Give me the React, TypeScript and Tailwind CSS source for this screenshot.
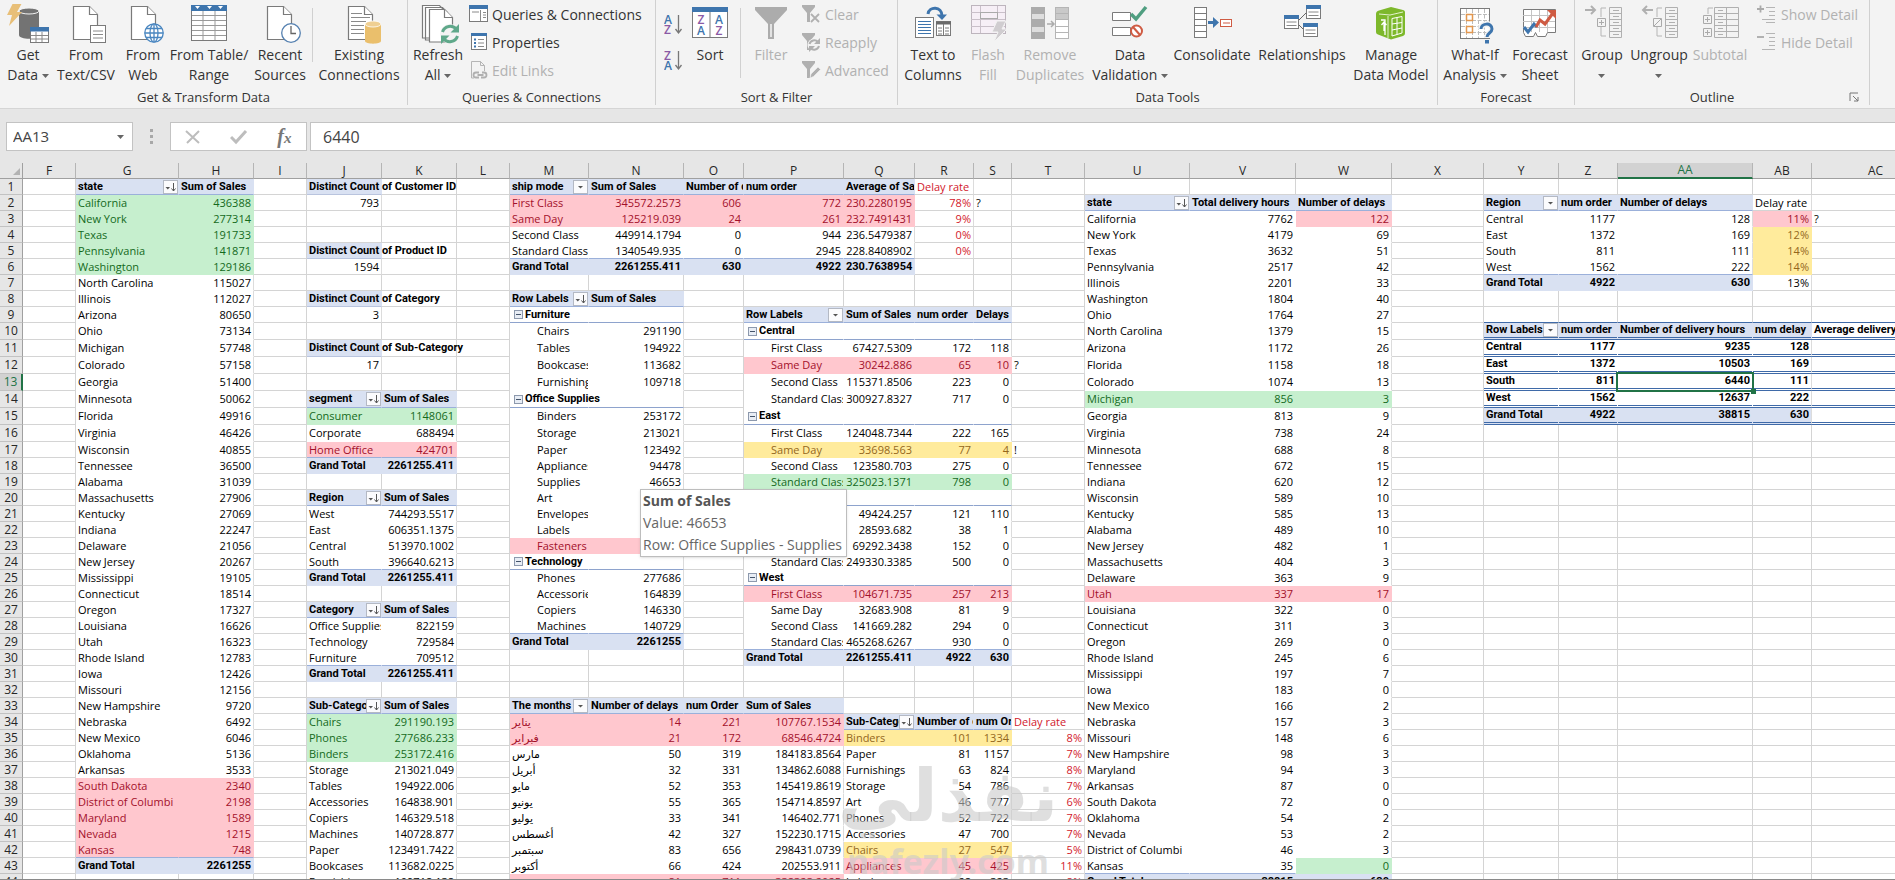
import type { ReactNode } from "react";

const COLS: [string, number][] = [
  ["F", 53], ["G", 103], ["H", 75], ["I", 53], ["J", 75], ["K", 75], ["L", 53], ["M", 79],
  ["N", 95], ["O", 60], ["P", 100], ["Q", 71], ["R", 59], ["S", 38], ["T", 73], ["U", 105],
  ["V", 106], ["W", 96], ["X", 92], ["Y", 75], ["Z", 59], ["AA", 135], ["AB", 59], ["AC", 128],
];
const TOTAL_WIDTH = 23 + COLS.reduce((sum, c) => sum + c[1], 0);
const ROW_COUNT = 44;

// Row codes: h header, t grand total, s group heading, p plain, i indented,
// g/r/y green, red and yellow fills (G/R/Y when indented), n normal cell,
// d red text, o overflowing title, H/D/T rows of the double ruled table
type Block = { col: string; row: number; btn?: "sort" | "down"; rows: string[] };

const BLOCKS: Block[] = [
  { col: "G", row: 1, btn: "sort", rows: [
    "h|state|Sum of Sales", "g|California|436388", "g|New York|277314", "g|Texas|191733",
    "g|Pennsylvania|141871", "g|Washington|129186", "p|North Carolina|115027", "p|Illinois|112027",
    "p|Arizona|80650", "p|Ohio|73134", "p|Michigan|57748", "p|Colorado|57158", "p|Georgia|51400",
    "p|Minnesota|50062", "p|Florida|49916", "p|Virginia|46426", "p|Wisconsin|40855",
    "p|Tennessee|36500", "p|Alabama|31039", "p|Massachusetts|27906", "p|Kentucky|27069",
    "p|Indiana|22247", "p|Delaware|21056", "p|New Jersey|20267", "p|Mississippi|19105",
    "p|Connecticut|18514", "p|Oregon|17327", "p|Louisiana|16626", "p|Utah|16323",
    "p|Rhode Island|12783", "p|Iowa|12426", "p|Missouri|12156", "p|New Hampshire|9720",
    "p|Nebraska|6492", "p|New Mexico|6046", "p|Oklahoma|5136", "p|Arkansas|3533",
    "r|South Dakota|2340", "r|District of Columbi|2198", "r|Maryland|1589", "r|Nevada|1215",
    "r|Kansas|748", "t|Grand Total|2261255",
  ] },
  { col: "J", row: 1, rows: ["o|Distinct Count of Customer ID", "n|793"] },
  { col: "J", row: 5, rows: ["o|Distinct Count of Product ID", "n|1594"] },
  { col: "J", row: 8, rows: ["o|Distinct Count of Category", "n|3"] },
  { col: "J", row: 11, rows: ["o|Distinct Count of Sub-Category", "n|17"] },
  { col: "J", row: 14, btn: "sort", rows: [
    "h|segment|Sum of Sales", "g|Consumer|1148061", "p|Corporate|688494", "r|Home Office|424701",
    "t|Grand Total|2261255.411",
  ] },
  { col: "J", row: 20, btn: "sort", rows: [
    "h|Region|Sum of Sales", "p|West|744293.5517", "p|East|606351.1375", "p|Central|513970.1002",
    "p|South|396640.6213", "t|Grand Total|2261255.411",
  ] },
  { col: "J", row: 27, btn: "sort", rows: [
    "h|Category|Sum of Sales", "p|Office Supplies|822159", "p|Technology|729584",
    "p|Furniture|709512", "t|Grand Total|2261255.411",
  ] },
  { col: "J", row: 33, btn: "sort", rows: [
    "h|Sub-Category|Sum of Sales", "g|Chairs|291190.193", "g|Phones|277686.233",
    "g|Binders|253172.416", "p|Storage|213021.049", "p|Tables|194922.006",
    "p|Accessories|164838.901", "p|Copiers|146329.518", "p|Machines|140728.877",
    "p|Paper|123491.7422", "p|Bookcases|113682.0225", "p|Furnishings|109718.138",
  ] },
  { col: "M", row: 1, btn: "down", rows: [
    "h|ship mode|Sum of Sales|Number of delays|num order|Average of Sales",
    "r|First Class|345572.2573|606|772|230.2280195", "r|Same Day|125219.039|24|261|232.7491431",
    "p|Second Class|449914.1794|0|944|236.5479387", "p|Standard Class|1340549.935|0|2945|228.8408902",
    "t|Grand Total|2261255.411|630|4922|230.7638954",
  ] },
  { col: "R", row: 1, rows: ["d|Delay rate", "d|78%", "d|9%", "d|0%", "d|0%"] },
  { col: "S", row: 2, rows: ["n|?"] },
  { col: "M", row: 8, btn: "sort", rows: [
    "h|Row Labels|Sum of Sales", "s|Furniture|", "i|Chairs|291190", "i|Tables|194922",
    "i|Bookcases|113682", "i|Furnishings|109718", "s|Office Supplies|", "i|Binders|253172",
    "i|Storage|213021", "i|Paper|123492", "i|Appliances|94478", "i|Supplies|46653",
    "i|Art|27119", "i|Envelopes|16476", "i|Labels|12486", "R|Fasteners|3024", "s|Technology|",
    "i|Phones|277686", "i|Accessories|164839", "i|Copiers|146330", "i|Machines|140729",
    "t|Grand Total|2261255",
  ] },
  { col: "P", row: 9, btn: "down", rows: [
    "h|Row Labels|Sum of Sales|num order|Delays", "s|Central|||",
    "i|First Class|67427.5309|172|118", "R|Same Day|30242.886|65|10",
    "i|Second Class|115371.8506|223|0", "i|Standard Class|300927.8327|717|0", "s|East|||",
    "i|First Class|124048.7344|222|165", "Y|Same Day|33698.563|77|4",
    "i|Second Class|123580.703|275|0", "G|Standard Class|325023.1371|798|0", "s|South|||",
    "i|First Class|49424.257|121|110", "i|Same Day|28593.682|38|1",
    "i|Second Class|69292.3438|152|0", "i|Standard Class|249330.3385|500|0", "s|West|||",
    "R|First Class|104671.735|257|213", "i|Same Day|32683.908|81|9",
    "i|Second Class|141669.282|294|0", "i|Standard Class|465268.6267|930|0",
    "t|Grand Total|2261255.411|4922|630",
  ] },
  { col: "T", row: 12, rows: ["n|?"] },
  { col: "T", row: 17, rows: ["n|!"] },
  { col: "M", row: 33, btn: "down", rows: [
    "h|The months|Number of delays|num Order|Sum of Sales", "r|يناير|14|221|107767.1534",
    "r|فبراير|21|172|68546.4724", "p|مارس|50|319|184183.8564", "p|أبريل|32|331|134862.6088",
    "p|مايو|52|353|145419.8619", "p|يونيو|55|365|154714.8597", "p|يوليو|33|341|146402.771",
    "p|أغسطس|42|327|152230.1715", "p|سبتمبر|83|656|298431.0739", "p|أكتوبر|66|424|202553.911",
    "r|نوفمبر|81|711|338323.2025",
  ] },
  { col: "Q", row: 34, btn: "sort", rows: [
    "h|Sub-Category|Number of delays|num Order", "y|Binders|101|1334", "p|Paper|81|1157",
    "p|Furnishings|63|824", "p|Storage|54|786", "p|Art|46|777", "p|Phones|52|722",
    "p|Accessories|47|700", "y|Chairs|27|547", "r|Appliances|45|425", "p|Labels|28|323",
  ] },
  { col: "T", row: 34, rows: [
    "d|Delay rate", "d|8%", "d|7%", "d|8%", "d|7%", "d|6%", "d|7%", "d|7%", "d|5%", "d|11%", "d|8%",
  ] },
  { col: "U", row: 2, btn: "sort", rows: [
    "h|state|Total delivery hours|Number of delays", "p|California|7762|122", "p|New York|4179|69",
    "p|Texas|3632|51", "p|Pennsylvania|2517|42", "p|Illinois|2201|33", "p|Washington|1804|40",
    "p|Ohio|1764|27", "p|North Carolina|1379|15", "p|Arizona|1172|26", "p|Florida|1158|18",
    "p|Colorado|1074|13", "g|Michigan|856|3", "p|Georgia|813|9", "p|Virginia|738|24",
    "p|Minnesota|688|8", "p|Tennessee|672|15", "p|Indiana|620|12", "p|Wisconsin|589|10",
    "p|Kentucky|585|13", "p|Alabama|489|10", "p|New Jersey|482|1", "p|Massachusetts|404|3",
    "p|Delaware|363|9", "r|Utah|337|17", "p|Louisiana|322|0", "p|Connecticut|311|3",
    "p|Oregon|269|0", "p|Rhode Island|245|6", "p|Mississippi|197|7", "p|Iowa|183|0",
    "p|New Mexico|166|2", "p|Nebraska|157|3", "p|Missouri|148|6", "p|New Hampshire|98|3",
    "p|Maryland|94|3", "p|Arkansas|87|0", "p|South Dakota|72|0", "p|Oklahoma|54|2",
    "p|Nevada|53|2", "p|District of Columbi|46|3", "p|Kansas|35|0", "t|Grand Total|38815|630",
  ] },
  { col: "W", row: 3, rows: ["r|122"] },
  { col: "W", row: 43, rows: ["g|0"] },
  { col: "Y", row: 2, btn: "down", rows: [
    "h|Region|num order|Number of delays", "p|Central|1177|128", "p|East|1372|169",
    "p|South|811|111", "p|West|1562|222", "t|Grand Total|4922|630",
  ] },
  { col: "AB", row: 2, rows: ["n|Delay rate", "r|11%", "y|12%", "y|14%", "y|14%", "n|13%"] },
  { col: "AC", row: 3, rows: ["n|?"] },
  { col: "Y", row: 10, btn: "down", rows: [
    "H|Row Labels|num order|Number of delivery hours|num delay", "D|Central|1177|9235|128",
    "D|East|1372|10503|169", "D|South|811|6440|111", "D|West|1562|12637|222",
    "T|Grand Total|4922|38815|630",
  ] },
  { col: "AC", row: 10, rows: ["D|Average delivery hours", "D|", "D|", "D|", "D|", "D|"] },
];

type Cell = { kind: string; text: string; first: boolean; last: boolean; btn?: "sort" | "down"; ruled?: boolean };

const colIndex = (name: string) => COLS.findIndex((c) => c[0] === name);

function buildCells() {
  const cells: Record<string, Cell> = {};
  for (const b of BLOCKS) {
    const start = colIndex(b.col);
    b.rows.forEach((line, r) => {
      const [kind, ...texts] = line.split("|");
      texts.forEach((text, c) => {
        cells[`${start + c}-${b.row + r}`] = {
          kind, text, first: c === 0, last: c === texts.length - 1,
          btn: r === 0 && c === 0 ? b.btn : undefined,
        };
        const above = cells[`${start + c}-${b.row + r - 1}`];
        if (kind === "t" && above) above.ruled = true;
      });
    });
  }
  return cells;
}

const CELLS = buildCells();

const KIND: Record<string, string> = {
  h: "bg-[#d9e1f2] font-['Roboto',sans-serif] font-bold border-b-[#9bb0da]",
  t: "bg-[#d9e1f2] font-['Roboto',sans-serif] font-bold border-b-transparent",
  s: "font-['Roboto',sans-serif] font-bold border-b-[#8ea3cd]",
  p: "border-b-transparent",
  i: "border-b-transparent",
  g: "bg-[#c6efce] text-[#146a1c] border-b-transparent",
  G: "bg-[#c6efce] text-[#146a1c] border-b-transparent",
  r: "bg-[#ffc7ce] text-[#a3102a] border-b-transparent",
  R: "bg-[#ffc7ce] text-[#a3102a] border-b-transparent",
  y: "bg-[#ffeb9c] text-[#94671c] border-b-transparent",
  Y: "bg-[#ffeb9c] text-[#94671c] border-b-transparent",
  n: "border-b-[#d4d4d4]",
  d: "text-[#d2202c] border-b-[#d4d4d4]",
  o: "bg-[#d9e1f2] font-['Roboto',sans-serif] font-bold border-b-[#b9c4de]",
  H: "bg-[#d9e1f2] font-['Roboto',sans-serif] font-bold border-b-3 [border-bottom-style:double] border-b-[#3f6aa8]",
  D: "font-['Roboto',sans-serif] font-bold border-b-3 [border-bottom-style:double] border-b-[#3f6aa8]",
  T: "bg-[#d9e1f2] font-['Roboto',sans-serif] font-bold border-b-3 [border-bottom-style:double] border-b-[#3f6aa8]",
};

function FilterButton({ type, label }: { type: "sort" | "down"; label: string }) {
  return (
    <button aria-label={`Filter ${label}`} className="h-[14px] w-[15px] shrink-0 border border-[#b4b9c4] bg-[#fbfbfd]">
      <svg width="13" height="12" viewBox="0 0 13 12" fill="#555" stroke="#555">
        {type === "sort" ? (
          <>
            <path d="M1.500 6h4.500L3.800 8.500z" stroke="none" />
            <path d="M9.500 2v8M7.500 7.500l2 2.500 2-2.500" fill="none" />
          </>
        ) : (
          <path d="M4 5h5L6.500 7.500z" stroke="none" />
        )}
      </svg>
    </button>
  );
}

function SheetCell({ cell, selected, topRule }: { cell?: Cell; selected: boolean; topRule: boolean }) {
  if (!cell) {
    return <td className={`border-r border-b border-r-[#d4d4d4] p-0 ${topRule ? "border-b-[#3f6aa8]" : "border-b-[#d4d4d4]"}`} />;
  }
  const { kind, text } = cell;
  const gridRight = "ndDHT".includes(kind) ? cell.last && kind !== "H" : cell.last && "psi".includes(kind);
  const numeric = /^[\d.]+%?$/.test(text);
  const indented = "iGRY".includes(kind) && cell.first;
  const spill = "so".includes(kind);
  const base = cell.ruled ? KIND[kind].replace("border-b-transparent", "border-b-[#9bb0da]") : KIND[kind];
  return (
    <td className={`border-r border-b p-0 ${gridRight ? "border-r-[#dcdcdc]" : "border-r-transparent"} ${base} ${selected ? "relative" : ""}`}>
      <div className={`flex items-center ${spill ? "" : "overflow-hidden"}`}>
        {kind === "s" && cell.first && (
          <button aria-label={`Collapse ${text}`} className="ml-1 flex h-[9px] w-[9px] shrink-0 items-center justify-center border border-[#8d99ad] bg-[#e8edf5]">
            <span className="h-px w-[5px] bg-[#44546a]" />
          </button>
        )}
        <div
          className={`min-w-0 flex-1 leading-[14px] whitespace-nowrap ${numeric ? "text-right" : "text-left"} ${
            indented ? "pl-[27px]" : "pl-[2px]"
          } ${numeric ? "pr-[2px]" : ""} ${spill ? "" : "overflow-hidden"}`}
        >
          {text}
        </div>
        {cell.btn && <FilterButton type={cell.btn} label={text} />}
      </div>
      {selected && (
        <div className="pointer-events-none absolute -inset-x-0.5 -top-0.5 -bottom-1 border-2 border-[#217346]">
          <span className="absolute -right-1 -bottom-1 h-[5px] w-[5px] bg-[#217346]" />
        </div>
      )}
    </td>
  );
}

function Sheet() {
  return (
    <div className="relative min-h-0 flex-1 overflow-hidden bg-white">
      <table
        className="table-fixed border-separate border-spacing-0 bg-white font-['Open_Sans','DejaVu_Sans',sans-serif] text-[11px] text-black"
        style={{ width: TOTAL_WIDTH }}
      >
        <colgroup>
          <col style={{ width: 23 }} />
          {COLS.map(([name, w]) => <col key={name} style={{ width: w }} />)}
        </colgroup>
        <thead>
          <tr className="h-4 bg-[#e6e6e6] text-[12px] leading-[14px] text-[#262626]">
            <th aria-label="Select all" className="border-r border-b border-[#a0a0a0] p-0">
              <svg className="ml-auto" width="12" height="12" viewBox="0 0 12 12"><path d="M10 3v7H3z" fill="#b3b3b3" /></svg>
            </th>
            {COLS.map(([name]) => (
              <th
                key={name}
                className={`border-r border-r-[#b5b5b5] p-0 font-normal ${
                  name === "AA" ? "border-b-2 border-b-[#217346] bg-[#d2d2d2] text-[#217346]" : "border-b border-b-[#a0a0a0]"
                }`}
              >
                {name}
              </th>
            ))}
          </tr>
        </thead>
        <tbody>
          {Array.from({ length: ROW_COUNT }, (_, i) => i + 1).map((row) => (
            <tr key={row} className={row >= 10 && row <= 16 ? "h-[17px]" : "h-4"}>
              <th
                className={`border-b border-b-[#c2c2c2] p-0 text-[12px] leading-[14px] font-normal ${
                  row === 13 ? "border-r-2 border-r-[#217346] bg-[#d2d2d2] text-[#217346]" : "border-r border-r-[#a0a0a0] bg-[#e6e6e6] text-[#262626]"
                }`}
              >
                {row}
              </th>
              {COLS.map(([name], c) => (
                <SheetCell
                  key={name}
                  cell={CELLS[`${c}-${row}`]}
                  selected={name === "AA" && row === 13}
                  topRule={row === 9 && c >= colIndex("Y")}
                />
              ))}
            </tr>
          ))}
        </tbody>
      </table>

      <div
        role="tooltip"
        className="absolute top-[326px] left-[640px] border border-[#bdbdbd] bg-white pr-1 pl-0.5 font-['Open_Sans',sans-serif] text-[14px] leading-[22px] whitespace-nowrap text-[#666] shadow-sm"
      >
        <p className="font-bold text-[#555]">Sum of Sales</p>
        <p>Value: 46653</p>
        <p>Row: Office Supplies - Supplies</p>
      </div>

      <div className="pointer-events-none absolute top-[588px] left-[843px] flex w-[210px] flex-col items-center text-[#cacaca]/60">
        <span className="font-['DejaVu_Sans',sans-serif] text-[72px] leading-[90px] font-bold">نفذلي</span>
        <span className="font-['Noto_Sans',sans-serif] text-[34px] leading-[40px] font-bold">nafezly.com</span>
      </div>
    </div>
  );
}

/* ---------- ribbon icons ---------- */

function Big({ children }: { children: ReactNode }) {
  return <svg width="44" height="40" viewBox="0 0 44 40" fill="none">{children}</svg>;
}

function Doc({ x = 9, stroke = "#7a7a7a" }) {
  return (
    <g transform={`translate(${x} 2)`} fill="#fff" stroke={stroke} strokeWidth="1.200">
      <path d="M.5.5h16l8 8v25h-24z" />
      <path d="M16.500.5v8h8" />
    </g>
  );
}

function MiniTable({ x, y, w = 18, h = 15 }: { x: number; y: number; w?: number; h?: number }) {
  return (
    <g transform={`translate(${x} ${y})`}>
      <rect x=".5" y=".5" width={w} height={h} fill="#fff" stroke="#7a7a7a" />
      <rect width={w + 1} height="4.500" fill="#3e75ad" />
      <path d={`M1 8.500h${w - 1}M1 12h${w - 1}M${w / 3} 5v${h - 5}M${(w / 3) * 2} 5v${h - 5}`} stroke="#8a8a8a" />
    </g>
  );
}

const icons = {
  getData: (
    <Big>
      <path d="M13 7v24c0 5 20 5 20 0V7z" fill="#737373" />
      <ellipse cx="23" cy="7" rx="10" ry="3" fill="#737373" stroke="#f3f3f3" />
      <path d="M7-1h9l-5 9h5L3 22l3-11H1z" fill="#e8bf78" />
      <MiniTable x={24} y={23} />
    </Big>
  ),
  csv: (
    <Big>
      <Doc />
      <rect x="26.500" y="21.500" width="15" height="17" fill="#fff" stroke="#7a7a7a" />
      <path d="M29 27h10M29 30.500h10M29 34h10" stroke="#8a8a8a" />
    </Big>
  ),
  web: (
    <Big>
      <Doc x={10} />
      <g stroke="#4a86c0" strokeWidth="1.300" fill="#fff">
        <circle cx="33" cy="29" r="9.200" />
        <ellipse cx="33" cy="29" rx="4" ry="9.200" />
        <path d="M23.800 29h18.400M33 20v18M25 24.500h16M25 33.500h16" fill="none" />
      </g>
    </Big>
  ),
  table: (
    <Big>
      <rect x="4.500" y="1.500" width="35" height="35" fill="#fff" stroke="#7a7a7a" />
      <rect x="4" y="1" width="36" height="6" fill="#3e75ad" />
      <path d="M8 2h5l-2.500 3zM20 2h5l-2.500 3zM31 2h5l-2.500 3z" fill="#fff" />
      <path d="M5 11.500h34M5 16.500h34M5 21.500h34M5 26.500h34M5 31.500h34M16 7v29M28 7v29" stroke="#999" />
    </Big>
  ),
  recent: (
    <Big>
      <Doc />
      <circle cx="33" cy="29" r="9.300" fill="#fff" stroke="#5580b0" strokeWidth="1.300" />
      <path d="M33 22v7.500h5" stroke="#666" strokeWidth="1.300" />
    </Big>
  ),
  existing: (
    <Big>
      <Doc x={11} />
      <path d="M14 9.500h11M14 13.500h19M14 17.500h15M14 21.500h13M14 25.500h13M14 29.500h13" stroke="#8a8a8a" />
      <path d="M28 20v17c0 3.500 16 3.500 16 0V20z" fill="#eabf6c" />
      <ellipse cx="36" cy="20" rx="8" ry="3" fill="#efcf92" stroke="#fff" strokeWidth=".8" />
    </Big>
  ),
  refresh: (
    <Big>
      <g fill="#fff" stroke="#7a7a7a" strokeWidth="1.200">
        <path d="M6.500 34V1.500h17l5 5V34zM9.500 36V3.500h17l5 5V36z" />
        <path d="M13.500 38V5.500h15l8 8V38z" />
        <path d="M28.500 5.500v8h8" />
      </g>
      <circle cx="34" cy="30" r="10" fill="#f3f3f3" />
      <g stroke="#5fa88a" strokeWidth="3">
        <path d="M26.500 28a8 8 0 0 1 14-2.500M41.500 32a8 8 0 0 1-14 2.500" />
      </g>
      <path d="M43 20v8.500h-8.500zM25 40v-8.500h8.500z" fill="#5fa88a" />
    </Big>
  ),
  sort: (
    <Big>
      <rect x="4.500" y="3.500" width="35" height="30" fill="#fff" stroke="#7a7a7a" />
      <rect x="4" y="3" width="36" height="5" fill="#3e75ad" />
      <path d="M22 8v25" stroke="#7a7a7a" />
      <g fontFamily="Open Sans" fontSize="12" fontWeight="600" textAnchor="middle">
        <text x="13" y="20" fill="#8a5aa5">Z</text><text x="13" y="31" fill="#3e75ad">A</text>
        <text x="31" y="20" fill="#3e75ad">A</text><text x="31" y="31" fill="#8a5aa5">Z</text>
      </g>
    </Big>
  ),
  filter: (
    <Big>
      <path d="M6 3h32v3L25 20v15h-6V20L6 6z" fill="#acacac" />
      <path d="M22 20v13" stroke="#e3e3e3" strokeWidth="2" />
    </Big>
  ),
  textColumns: (
    <Big>
      <rect x="4.500" y="13.500" width="18" height="20" fill="#fff" stroke="#7a7a7a" />
      <path d="M7 17.500h13M7 20.500h13M7 23.500h13M7 26.500h13M7 29.500h13" stroke="#3e75ad" />
      <rect x="25.500" y="17.500" width="14" height="14" fill="#fff" stroke="#7a7a7a" />
      <path d="M25 19h15" stroke="#6b6b6b" strokeWidth="3" />
      <path d="M27 24h4M27 27h4M27 30h4M34 24h4M34 27h4M34 30h4M32.500 20v11" stroke="#7a7a7a" />
      <path d="M17 10c1-8 14-8 14 2" stroke="#3e75ad" strokeWidth="3" />
      <path d="M25.500 10.500h10.500L31 16z" fill="#3e75ad" />
    </Big>
  ),
  flash: (
    <Big>
      <rect x="5.500" y="1.500" width="34" height="28" fill="#f6eff6" stroke="#bdb5bd" />
      <path d="M5 8.500h34M5 15.500h34M5 22.500h34M14.500 2v27M31.500 2v14" stroke="#c9c0c9" />
      <rect x="14.500" y="8.500" width="17" height="6" stroke="#aaa" />
      <path d="M31 17h9l-4 8h5L28 38l4-10h-6z" fill="#d0cdd0" stroke="#f3f3f3" />
    </Big>
  ),
  duplicates: (
    <Big>
      <rect x="3" y="3" width="14" height="32" fill="#acacac" />
      <path d="M4 10h12v5H4zM4 23h12v5H4z" fill="#dedede" />
      <path d="M19 20h6M23 17l3 3-3 3" stroke="#acacac" strokeWidth="1.500" />
      <rect x="27.500" y="3.500" width="13" height="31" fill="#fff" stroke="#b5b5b5" />
      <path d="M28 4h12v5H28zM28 9h12v6H28z" fill="#c9c9c9" />
      <path d="M28 9.500h12M28 15.500h12M28 22.500h12M28 28.500h12" stroke="#b5b5b5" />
    </Big>
  ),
  validation: (
    <Big>
      <path d="M4.500 8.500h18v8h-18zM4.500 23.500h18v8h-18z" fill="#fff" stroke="#7a7a7a" />
      <path d="M23 10l5 5L38 3" stroke="#4f9e80" strokeWidth="3.500" />
      <circle cx="28.500" cy="27" r="5.500" fill="#fff" stroke="#cf5b43" strokeWidth="2" />
      <path d="M25 23l7 8" stroke="#cf5b43" strokeWidth="2" />
    </Big>
  ),
  consolidate: (
    <Big>
      <rect x="4.500" y="3.500" width="12" height="30" fill="#fff" stroke="#7a7a7a" />
      <path d="M5 9.500h12M5 15.500h12M5 21.500h12M5 27.500h12" stroke="#7a7a7a" />
      <path d="M18 17h5v-4l6 5.500-6 5.500v-4h-5z" fill="#3e75ad" />
      <rect x="30.500" y="15.500" width="11" height="7" fill="#fff" stroke="#cf5b43" />
      <path d="M33 19h7" stroke="#cf5b43" />
    </Big>
  ),
  relationships: (
    <Big>
      <path d="M18 17l8-8M18 20l6 6" stroke="#666" />
      {[[4, 11], [26, 1], [23, 19]].map(([x, y]) => (
        <g key={x} transform={`translate(${x} ${y})`}>
          <rect x=".5" y=".5" width="14" height="13" fill="#fff" stroke="#7a7a7a" />
          <rect width="15" height="4" fill="#3e75ad" />
          <path d="M2.500 7h10M2.500 10.500h10" stroke="#8a8a8a" />
        </g>
      ))}
    </Big>
  ),
  model: (
    <Big>
      <path d="M7 10c0-2 1-3 3-3.500L22 3l12 3c2 .5 2 1.500 2 3v20c0 2-1 2.500-2 3l-12 3.500-13-5c-1.500-.5-2-1.500-2-3z" fill="#7db82b" />
      <path d="M10 10l11 1 13-3M19 12v22" stroke="#e4f2cd" />
      <path d="M23 14.500l10-2v16.500l-10 3zM23 20l10-1.500M23 26l10-2M28 13.500v17" stroke="#fff" />
      <path d="M16 31V16h-4M15 18v9M12.500 21l2.500-3 2.500 3" stroke="#fff" strokeWidth="1.300" />
    </Big>
  ),
  whatIf: (
    <Big>
      <rect x="7.500" y="4.500" width="29" height="30" fill="#fff" stroke="#7a7a7a" />
      <path d="M8 10.500h28M8 16.500h28M8 22.500h28M8 28.500h28M13.500 5v29M19.500 5v29M25.500 5v29M31.500 5v29" stroke="#bbb" strokeDasharray="4 1.500" />
      <path d="M13.500 10.500h6v6h-6zM13.500 22.500h6v6h-6z" stroke="#e3974e" strokeWidth="1.500" />
      <path d="M28 25c0-6 11-7 11 0 0 4-5 4-5 9" stroke="#f3f3f3" strokeWidth="6" />
      <path d="M28 25c0-6 11-7 11 0 0 4-5 4-5 8" stroke="#3e75ad" strokeWidth="3" />
      <rect x="32" y="36" width="4" height="3.500" fill="#3e75ad" />
    </Big>
  ),
  forecast: (
    <Big>
      <path d="M5.500 5.500h32v23h-8l-2 4h-8l-2-4-2 4h-8l-2-4z" fill="#fff" stroke="#7a7a7a" />
      <path d="M5 11.500h32M5 17.500h32M5 23.500h32M13.500 6v22M21.500 6v22M29.500 6v22" stroke="#c4c4c4" />
      <path d="M6 23l4 5 6-8 3 3" stroke="#3e75ad" strokeWidth="3" />
      <path d="M18 23l4-7 5 4 8-11" stroke="#cf5b43" strokeWidth="3" />
      <path d="M29 6h9v9z" fill="#cf5b43" />
    </Big>
  ),
  group: (
    <Big>
      <path d="M5 6h10M11 2l4 4-4 4" stroke="#b0b0b0" strokeWidth="2" />
      <path d="M26 4h-5v9M21 23v9h5" stroke="#b5b5b5" />
      <path d="M17.500 14.500h8v8h-8zM19 18.500h5M21.500 16v5" stroke="#aaa" />
      <path d="M29.500 3.500h12v30h-12zM30 9.500h11M30 15.500h11M30 21.500h11M30 27.500h11M33 6.500h6M33 12.500h6M33 18.500h6M33 24.500h6M33 30.500h6" stroke="#b0b0b0" />
    </Big>
  ),
  ungroup: (
    <Big>
      <path d="M16 6H6M10 2L6 6l4 4" stroke="#b0b0b0" strokeWidth="2" />
      <path d="M25 4h-5v9M20 23v9h5" stroke="#b5b5b5" />
      <path d="M16.500 14.500h8v8h-8zM17 22l7-7" stroke="#aaa" />
      <path d="M28.500 3.500h12v30h-12zM29 9.500h11M29 15.500h11M29 21.500h11M29 27.500h11M32 6.500h6M32 12.500h6M32 18.500h6M32 24.500h6M32 30.500h6" stroke="#b0b0b0" />
    </Big>
  ),
  subtotal: (
    <Big>
      <path d="M15 4h-5v6" stroke="#b5b5b5" />
      <path d="M5.500 11.500h8v8h-8zM7 15.500h5M9.500 13v5M5.500 24.500h8v8h-8zM7 28.500h5M9.500 26v5" stroke="#aaa" />
      <path d="M16.500 3.500h24v30h-24zM17 9.500h23M17 15.500h23M17 21.500h23M17 27.500h23M28.500 4v29M20 6.500h5M20 12.500h5M20 18.500h5M20 24.500h5M20 30.500h5" stroke="#b0b0b0" />
    </Big>
  ),
};

function Small({ children }: { children: ReactNode }) {
  return <svg width="20" height="20" viewBox="0 0 20 20" fill="none" className="shrink-0">{children}</svg>;
}

const funnel = <path d="M1 1h13v2L9 9v9H6V9L1 3z" fill="#b0b0b0" />;

const smallIcons = {
  queries: (
    <Small>
      <rect x="1.500" y="1.500" width="18" height="16" fill="#fff" stroke="#7a7a7a" />
      <rect x="1" y="1" width="19" height="4" fill="#3e75ad" />
      <path d="M4 8h7M12.500 6v11M15 8.500h3M15 11h3M15 13.500h3" stroke="#8a8a8a" />
    </Small>
  ),
  properties: (
    <Small>
      <rect x="3.500" y="1.500" width="15" height="16" fill="#fff" stroke="#7a7a7a" />
      <rect x="3" y="1" width="16" height="3" fill="#3e75ad" />
      <path d="M10 7.500h6M10 11h6M10 14.500h6" stroke="#8a8a8a" />
      <path d="M6 6.500h2v2H6zM6 10h2v2H6zM6 13.500h2v2H6z" fill="#3e75ad" />
    </Small>
  ),
  links: (
    <Small>
      <path d="M6 18H3.500V1.500h9l4 4V11M12.500 1.500v4h4" stroke="#b5b5b5" />
      <path d="M11 12.500H8a2.500 2.500 0 0 0 0 5h3M14 12.500h2a2.500 2.500 0 0 1 0 5h-3M9.500 15h6" stroke="#b0b0b0" strokeWidth="1.800" />
    </Small>
  ),
  clear: <Small>{funnel}<path d="M10 10l8 8M18 10l-8 8" stroke="#b0b0b0" strokeWidth="1.800" /></Small>,
  reapply: (
    <Small>
      {funnel}
      <circle cx="13" cy="13" r="6.500" fill="#f3f3f3" />
      <path d="M8.500 12a5 5 0 0 1 8.500-2M18 14a5 5 0 0 1-8.500 2" stroke="#b0b0b0" strokeWidth="2" />
      <path d="M19 6v6h-6zM8 20v-6h6z" fill="#b0b0b0" />
    </Small>
  ),
  advanced: <Small>{funnel}<path d="M9 18l1-4 7-7 2.500 2.500-7 7z" fill="#b0b0b0" stroke="#f3f3f3" strokeWidth=".6" /></Small>,
  show: <Small><path d="M0 5h7M3.500 1.500v7" stroke="#aaa" strokeWidth="1.800" /><path d="M9 3.500h9M12 7.500h6M12 11.500h6M5 15.500h13M9 18.500h9" stroke="#b5b5b5" /></Small>,
  hide: <Small><path d="M0 5h7" stroke="#aaa" strokeWidth="1.800" /><path d="M9 1.500h9M12 5.500h6M12 9.500h6M12 13.500h6M5 17.500h13" stroke="#b5b5b5" /></Small>,
};

function Caret() {
  return <svg width="7" height="4" viewBox="0 0 7 4" className="inline-block align-middle"><path d="M0 0h7L3.500 4z" fill="#666" /></svg>;
}

function BigButton({ icon, lines, width, caret, disabled }: {
  icon: ReactNode; lines: string[]; width: string; caret?: boolean; disabled?: boolean;
}) {
  return (
    <button disabled={disabled} className={`flex shrink-0 flex-col items-center pt-1 ${width} ${disabled ? "text-[#b1b1b1]" : "text-[#333]"}`}>
      {icon}
      <span className="mt-px block text-center leading-5 whitespace-nowrap">
        {lines[0]}
        <br />
        {lines[1]}{caret && <> <Caret /></>}
      </span>
    </button>
  );
}

function SmallButton({ icon, label, disabled }: { icon: ReactNode; label: string; disabled?: boolean }) {
  return (
    <button disabled={disabled} className={`flex h-7 items-center gap-1 whitespace-nowrap ${disabled ? "text-[#b1b1b1]" : "text-[#333]"}`}>
      {icon}{label}
    </button>
  );
}

function Group({ label, width, launcher, children }: { label: string; width: string; launcher?: boolean; children: ReactNode }) {
  return (
    <section aria-label={label} className={`flex h-[105px] shrink-0 flex-col border-r border-[#d0d0d0] ${width}`}>
      <div className="flex h-[88px] shrink-0 items-start">{children}</div>
      <div className="flex h-[18px] shrink-0 items-center text-[13px] leading-[18px] text-[#333]">
        <span className="flex-1 text-center">{label}</span>
        {launcher && (
          <button aria-label="Outline settings" className="mr-1 w-4">
            <svg width="10" height="10" viewBox="0 0 10 10" fill="none" stroke="#777"><path d="M1 9V1h8M4 4l5 5M9 5v4H5" /></svg>
          </button>
        )}
      </div>
    </section>
  );
}

function SortArrow({ top, bottom, label }: { top: "A" | "Z"; bottom: "A" | "Z"; label: string }) {
  const tint = (l: string) => (l === "A" ? "#3e75ad" : "#8a5aa5");
  return (
    <button aria-label={label} className="h-6 w-5">
      <svg width="20" height="24" viewBox="0 0 20 24">
        <g fontFamily="Open Sans" fontSize="12" fontWeight="600">
          <text x="0" y="12" fill={tint(top)}>{top}</text>
          <text x="0" y="22" fill={tint(bottom)}>{bottom}</text>
        </g>
        <path d="M14.500 3v18M11.500 17l3 4 3-4" fill="none" stroke="#777" strokeWidth="1.300" />
      </svg>
    </button>
  );
}

function Ribbon() {
  return (
    <div className="flex h-[109px] shrink-0 overflow-hidden border-b border-[#d5d5d5] bg-[#f3f3f3]">
      <Group label="Get & Transform Data" width="w-[408px]">
        <BigButton icon={icons.getData} lines={["Get", "Data"]} width="w-[56px]" caret />
        <BigButton icon={icons.csv} lines={["From", "Text/CSV"]} width="w-[60px]" />
        <BigButton icon={icons.web} lines={["From", "Web"]} width="w-[54px]" />
        <BigButton icon={icons.table} lines={["From Table/", "Range"]} width="w-[78px]" />
        <BigButton icon={icons.recent} lines={["Recent", "Sources"]} width="w-[64px]" />
        <div className="mt-2 h-[54px] w-px bg-[#d0d0d0]" />
        <BigButton icon={icons.existing} lines={["Existing", "Connections"]} width="w-[92px]" />
      </Group>
      <Group label="Queries & Connections" width="w-[248px]">
        <BigButton icon={icons.refresh} lines={["Refresh", "All"]} width="w-[60px]" caret />
        <div className="flex flex-col">
          <SmallButton icon={smallIcons.queries} label="Queries & Connections" />
          <SmallButton icon={smallIcons.properties} label="Properties" />
          <SmallButton icon={smallIcons.links} label="Edit Links" disabled />
        </div>
      </Group>
      <Group label="Sort & Filter" width="w-[242px]">
        <div className="flex w-8 flex-col gap-3 pt-3 pl-2">
          <SortArrow top="A" bottom="Z" label="Sort A to Z" />
          <SortArrow top="Z" bottom="A" label="Sort Z to A" />
        </div>
        <BigButton icon={icons.sort} lines={["Sort", ""]} width="w-[44px]" />
        <div className="mt-2 mr-1 ml-2 h-[70px] w-px bg-[#d0d0d0]" />
        <BigButton icon={icons.filter} lines={["Filter", ""]} width="w-[52px]" disabled />
        <div className="ml-1 flex flex-col">
          <SmallButton icon={smallIcons.clear} label="Clear" disabled />
          <SmallButton icon={smallIcons.reapply} label="Reapply" disabled />
          <SmallButton icon={smallIcons.advanced} label="Advanced" disabled />
        </div>
      </Group>
      <Group label="Data Tools" width="w-[540px]">
        <BigButton icon={icons.textColumns} lines={["Text to", "Columns"]} width="w-[70px]" />
        <BigButton icon={icons.flash} lines={["Flash", "Fill"]} width="w-[40px]" disabled />
        <BigButton icon={icons.duplicates} lines={["Remove", "Duplicates"]} width="w-[84px]" disabled />
        <BigButton icon={icons.validation} lines={["Data", "Validation"]} width="w-[76px]" caret />
        <BigButton icon={icons.consolidate} lines={["Consolidate", ""]} width="w-[88px]" />
        <BigButton icon={icons.relationships} lines={["Relationships", ""]} width="w-[92px]" />
        <BigButton icon={icons.model} lines={["Manage", "Data Model"]} width="w-[86px]" />
      </Group>
      <Group label="Forecast" width="w-[137px]">
        <BigButton icon={icons.whatIf} lines={["What-If", "Analysis"]} width="w-[74px]" caret />
        <BigButton icon={icons.forecast} lines={["Forecast", "Sheet"]} width="w-[56px]" />
      </Group>
      <Group label="Outline" width="w-[295px]" launcher>
        <BigButton icon={icons.group} lines={["Group", ""]} width="w-[54px]" caret />
        <BigButton icon={icons.ungroup} lines={["Ungroup", ""]} width="w-[60px]" caret />
        <BigButton icon={icons.subtotal} lines={["Subtotal", ""]} width="w-[62px]" disabled />
        <div className="ml-1.5 flex flex-col">
          <SmallButton icon={smallIcons.show} label="Show Detail" disabled />
          <SmallButton icon={smallIcons.hide} label="Hide Detail" disabled />
        </div>
      </Group>
    </div>
  );
}

function FormulaBar() {
  return (
    <div className="flex h-[54px] shrink-0 items-start bg-[#e6e6e6] pt-[13px] pl-1.5 text-[16px] text-[#444]">
      <div className="flex h-[29px] w-[127px] items-center border border-[#c3c3c3] bg-white">
        <input aria-label="Name box" defaultValue="AA13" className="w-0 flex-1 pl-1.5 text-[15px] outline-none" />
        <button aria-label="Name box list" className="flex w-6 justify-center"><Caret /></button>
      </div>
      <div className="flex h-[29px] w-[37px] flex-col items-center justify-center gap-[3px]">
        <span className="h-[3px] w-[3px] bg-[#a8a8a8]" />
        <span className="h-[3px] w-[3px] bg-[#a8a8a8]" />
        <span className="h-[3px] w-[3px] bg-[#a8a8a8]" />
      </div>
      <div className="flex h-[29px] w-[137px] items-center justify-around border border-[#c3c3c3] bg-white">
        <button aria-label="Cancel">
          <svg width="16" height="16" viewBox="0 0 16 16" fill="none" stroke="#bdbdbd" strokeWidth="2"><path d="M1 2l13 12M14 2L2 14" /></svg>
        </button>
        <button aria-label="Enter">
          <svg width="18" height="16" viewBox="0 0 18 16" fill="none" stroke="#bdbdbd" strokeWidth="3"><path d="M1 8l5 5L16 2" /></svg>
        </button>
        <button aria-label="Insert function" className="font-['Liberation_Serif',serif] text-[20px] leading-6 font-bold text-[#777] italic">
          f<span className="text-[15px]">x</span>
        </button>
      </div>
      <input aria-label="Formula bar" defaultValue="6440" className="ml-[3px] h-[29px] min-w-0 flex-1 border border-r-0 border-[#c3c3c3] bg-white pl-3 outline-none" />
    </div>
  );
}

export default function App() {
  return (
    <div className="flex h-screen w-full flex-col overflow-hidden border-b border-[#8a8a8a] bg-[#e6e6e6] font-['Open_Sans',sans-serif] text-[14px]">
      <Ribbon />
      <FormulaBar />
      <Sheet />
    </div>
  );
}
